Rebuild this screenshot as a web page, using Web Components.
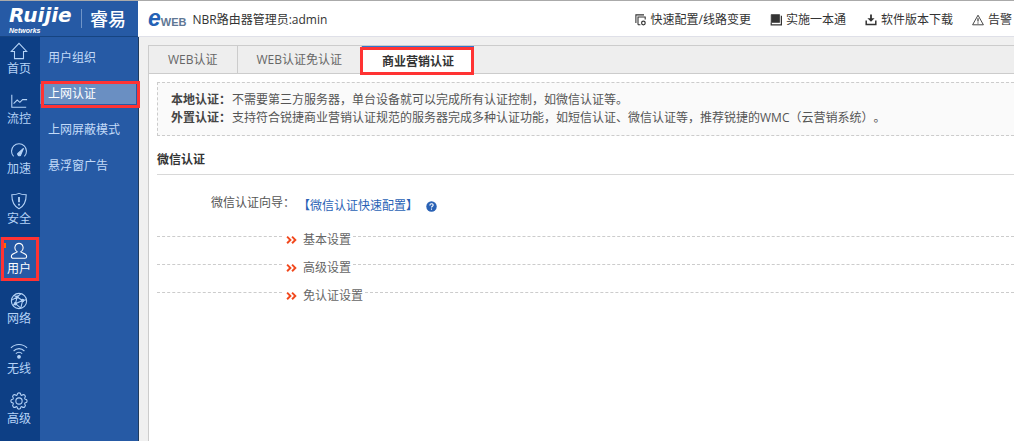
<!DOCTYPE html>
<html lang="zh-CN">
<head>
<meta charset="utf-8">
<title>eWEB</title>
<style>
html,body{height:100%}
body{margin:0;overflow:hidden;font:12px/18px "Open Sans","Noto Sans CJK SC",sans-serif;color:#555;text-spacing-trim:space-all}
</style>
</head>
<body>
<eweb-app></eweb-app>
<script>
const define = (name, html, setup) => customElements.define(name, class extends HTMLElement {
  connectedCallback() {
    if (this.shadowRoot) return;
    const t = document.createElement('template');
    t.innerHTML = '<style>*{box-sizing:border-box}a{color:inherit;text-decoration:none}</style>' + html;
    this.attachShadow({mode: 'open'}).append(t.content.cloneNode(true));
    if (setup) setup(this, this.shadowRoot);
  }
});

const shapes = {
  home: '<path d="M1.500 10.500 10 1.500l8.500 9H15V18.500H5v-8Z"/>',
  flow: '<path d="M2 3v14h16M4 13l4-4 3 2.500 3-3h5"/>',
  speed: '<path d="M4 16A8.300 8.300 0 1 1 16 16"/><path d="M8.500 13 15 7l-3.500 8a2 2 0 0 1-3-2Z" fill="currentColor"/>',
  shield: '<path d="M10 1.500c2.500 1.500 5 1.500 8 1.500 0 8-2 12.500-8 15.500C4 15.500 2 11 2 3c3 0 5.500 0 8-1.500Z"/><path d="M10 5.500v6M10 13v2" stroke-width="2"/>',
  user: '<path d="M8 11C3.500 8 5.500 1.500 10 1.500S16.500 8 12 11c2 1.500 6.500 1.500 6.500 5 0 1.500-1 2-2 2h-13c-1 0-2-.500-2-2 0-3.500 4.500-3.500 6.500-5Z"/>',
  network: '<circle cx="10" cy="10" r="8.500"/><path d="M4.500 4 8 5.500l6 4 4-1M8 5.500 6 13l-3 2M6 13l8-3.500L12 18M8 5.500 12 2M2 9l6-3.500M6 13l6 5"/><g fill="currentColor"><circle cx="8" cy="5.500" r="1"/><circle cx="14" cy="9.500" r="1.300"/><circle cx="6" cy="13" r="1.300"/></g>',
  wifi: '<path d="M1 6.500c5-5 13-5 18 0M4 10c3.500-3.500 8.500-3.500 12 0M6.500 13c2-2 5-2 7 0"/><circle cx="10" cy="16.500" r="1.500" fill="currentColor"/>',
  gear: '<circle cx="10" cy="10" r="3.500"/><path d="M8 3a2 2 0 0 1 4 0q.5 1 1.500.6a2 2 0 0 1 2.900 2.900q-.4 1 .6 1.500a2 2 0 0 1 0 4q-1 .5-.6 1.500a2 2 0 0 1-2.900 2.900q-1-.4-1.500.6a2 2 0 0 1-4 0q-.5-1-1.500-.6a2 2 0 0 1-2.900-2.900q.4-1-.6-1.500a2 2 0 0 1 0-4q1-.5.6-1.500a2 2 0 0 1 2.900-2.900Q7.500 4 8 3Z"/>',
  config: '<path d="M1.500 15V1.500H15M5 18V5h12v4M5 18h4" stroke-width="1.800"/><circle cx="14" cy="15" r="3" stroke-width="2"/>',
  book: '<path d="M2 1h14v13H2Z" fill="currentColor"/><path d="M2 14v4h17V3" stroke-width="2"/>',
  download: '<path d="M2 11v6.500h16V11" stroke-width="2.500"/><path d="M8.500 1h3v6H16l-6 6-6-6h4.500Z" fill="currentColor" stroke="none"/>',
  warning: '<path d="M10 2 19 18H1Z" stroke-width="1.500"/><path d="M10 7v5.500M10 14v2" stroke-width="2"/>',
  help: '<circle cx="10" cy="10" r="9.500" fill="currentColor" stroke="none"/><path d="M7 8c0-4 6-4 6-.500 0 2-3 2-3 4.500M10 13.500V16" stroke="#fff" stroke-width="2"/>',
  more: '<path d="m2 3 6 6-6 6M11 3l6 6-6 6" stroke-width="3.500"/>'
};
define('e-icon', '<style>:host{display:inline-flex;flex:none;width:18px;height:18px}svg{width:100%;height:100%;fill:none;stroke:currentColor;stroke-width:1.200}</style><svg viewBox="0 0 20 20" aria-hidden="true"></svg>',
  (el, r) => r.querySelector('svg').innerHTML = shapes[el.getAttribute('name')]);

define('brand-logo', `<style>
:host{display:flex;align-items:center;width:138px;height:36px;padding-left:9px;background:#265aa5;border-bottom:1px solid #164481;color:#fff}
.name{width:72px}
b{display:block;font:italic bold 20px/24px "DejaVu Sans",sans-serif}
small{display:block;font:italic bold 7px/8px "Liberation Sans",sans-serif}
span{border-left:1px solid #6f94c8;padding-left:8px;font:500 18px/19px "Noto Sans CJK SC",sans-serif}
</style><div class="name"><b>Ruijie</b><small>Networks</small></div><span>睿易</span>`);

define('tool-link', `<style>:host{display:block}a{display:flex;align-items:center;gap:4px;color:#333;white-space:nowrap}e-icon{width:12px;height:12px}</style><a href="#"><e-icon></e-icon><slot></slot></a>`,
  (el, r) => { const i = document.createElement('e-icon'); i.setAttribute('name', el.getAttribute('icon')); r.querySelector('e-icon').replaceWith(i); });

define('app-header', `<style>
:host{display:flex;height:37px;border-top:1px solid #aaa;background:#fff;overflow:hidden}
.bar{flex:1;min-width:0;display:flex;align-items:center;padding:2px 2px 0 10px;border-bottom:1px solid #dfe0e8}
.web{display:flex;align-items:baseline;color:#5f7795;font:bold 11px/20px "Liberation Sans",sans-serif;margin-right:6px}
.web i{color:#2461b5;font:italic bold 23px/20px "Liberation Sans",sans-serif}
.who{color:#333;flex:1;white-space:nowrap}
nav{display:flex;gap:19px}
</style><brand-logo></brand-logo><div class="bar"><div class="web"><i>e</i>WEB</div><span class="who">NBR路由器管理员:admin</span>
<nav><tool-link icon="config">快速配置/线路变更</tool-link><tool-link icon="book">实施一本通</tool-link><tool-link icon="download">软件版本下载</tool-link><tool-link icon="warning">告警</tool-link></nav></div>`);

define('rail-item', `<style>
:host{display:block;position:relative;height:44px;color:#b5d3f7}
a{display:flex;flex-direction:column;align-items:center;gap:1px;padding:5px 2px 0 0;line-height:16px}
:host([active]){background:#265aa5;color:#fff}
:host([active])::before{content:"";position:absolute;left:4px;top:6px;width:2px;height:5px;background:#f60}
:host([active])::after{content:"";position:absolute;inset:0 1px;border:3px solid #f33}
</style><a href="#"><e-icon></e-icon><slot></slot></a>`,
  (el, r) => { const i = document.createElement('e-icon'); i.setAttribute('name', el.getAttribute('icon')); r.querySelector('e-icon').replaceWith(i); });

define('side-rail', `<style>:host{display:flex;flex-direction:column;gap:6px;width:40px;background:#0d3f85}</style><slot></slot>`);

define('sub-item', `<style>
:host{display:block;position:relative;padding:8px 2px 8px 0;color:#c3daf8}
a{display:block;line-height:20px;padding-left:8px}
:host([active]){color:#fff}
:host([active]) a{background:#6a8fc2}
:host([active])::after{content:"";position:absolute;inset:5px -2px 4px 1px;border:3px solid #f33}
</style><a href="#"><slot></slot></a>`);
define('sub-menu', `<style>:host{display:block;width:99px;padding-top:3px;background:#265aa5;border-right:1px solid #203a5c}</style><slot></slot>`);

define('tab-item', `<style>
:host{display:block;position:relative;border-right:1px solid #ccc}
button{display:block;height:27px;padding:0 19px;border:0;background:none;font:inherit;color:#666;white-space:nowrap}
:host([active]){background:#fff;margin-bottom:-1px;border:0}
:host([active]) button{font-weight:bold;color:#333;padding:2px 20px 0;height:28px;border-top:2px solid #2e75d0}
:host([active])::after{content:"";position:absolute;inset:1px 0 -1px -2px;border:3px solid #f33}
</style><button type="button"><slot></slot></button>`);

define('fold-section', `<style>
:host{display:flex;align-items:flex-start;height:18px}
:host::before{content:"";width:125px;border-top:1px dashed #ccc;margin-top:5px}
:host::after{content:"";flex:1;border-top:1px dashed #ccc;margin-top:5px}
a{display:flex;align-items:center;gap:6px;padding:0 2px 0 4px;color:#666}
e-icon{width:11px;height:11px;color:#f1481d}
</style><a href="#"><e-icon name="more"></e-icon><slot></slot></a>`);

define('auth-panel', `<style>
:host{display:block;background:#fff;border:1px solid #ccc;border-width:1px 0 0 1px}
.tabs{display:flex;height:28px;background:#eee;border-bottom:1px solid #ccc}
.body{padding:8px 0 0 8px}
.note{background:#fafafa;border:1px dashed #ccc;border-right:0;padding:8px 13px}
p{margin:0}
.note b{color:#444;margin-right:1px}
h2{margin:0;padding:15px 0 5px;border-bottom:1px solid #d8d8d8;font-size:12px;line-height:18px;color:#333}
.row{display:flex;padding-top:19px;gap:3px}
.label{width:138px;text-align:right;white-space:nowrap}
.guide{display:flex;align-items:center;gap:8px;padding-top:3px;color:#2a62b5}
e-icon{width:11px;height:11px}
.folds{display:grid;gap:10px;padding-top:16px}
</style>
<div class="tabs"><tab-item>WEB认证</tab-item><tab-item>WEB认证免认证</tab-item><tab-item active>商业营销认证</tab-item></div>
<div class="body"><div class="note"><p><b>本地认证：</b>不需要第三方服务器，单台设备就可以完成所有认证控制，如微信认证等。</p><p><b>外置认证：</b>支持符合锐捷商业营销认证规范的服务器完成多种认证功能，如短信认证、微信认证等，推荐锐捷的WMC（云营销系统）。</p></div>
<h2>微信认证</h2>
<div class="row"><span class="label">微信认证向导：</span><span class="guide"><a href="#">【微信认证快速配置】</a><e-icon name="help"></e-icon></span></div>
<div class="folds"><fold-section>基本设置</fold-section><fold-section>高级设置</fold-section><fold-section>免认证设置</fold-section></div></div>`);

define('eweb-app', `<style>
:host{display:grid;grid-template:auto 1fr/auto auto minmax(0,1fr);min-height:100%;background:#f0f0f0}
app-header{grid-column:1/-1}
auth-panel{margin:8px 0 0 9px}
</style><app-header></app-header>
<side-rail><rail-item icon="home">首页</rail-item><rail-item icon="flow">流控</rail-item><rail-item icon="speed">加速</rail-item><rail-item icon="shield">安全</rail-item><rail-item icon="user" active>用户</rail-item><rail-item icon="network">网络</rail-item><rail-item icon="wifi">无线</rail-item><rail-item icon="gear">高级</rail-item></side-rail>
<sub-menu><sub-item>用户组织</sub-item><sub-item active>上网认证</sub-item><sub-item>上网屏蔽模式</sub-item><sub-item>悬浮窗广告</sub-item></sub-menu>
<auth-panel></auth-panel>`);
</script>
</body>
</html>
